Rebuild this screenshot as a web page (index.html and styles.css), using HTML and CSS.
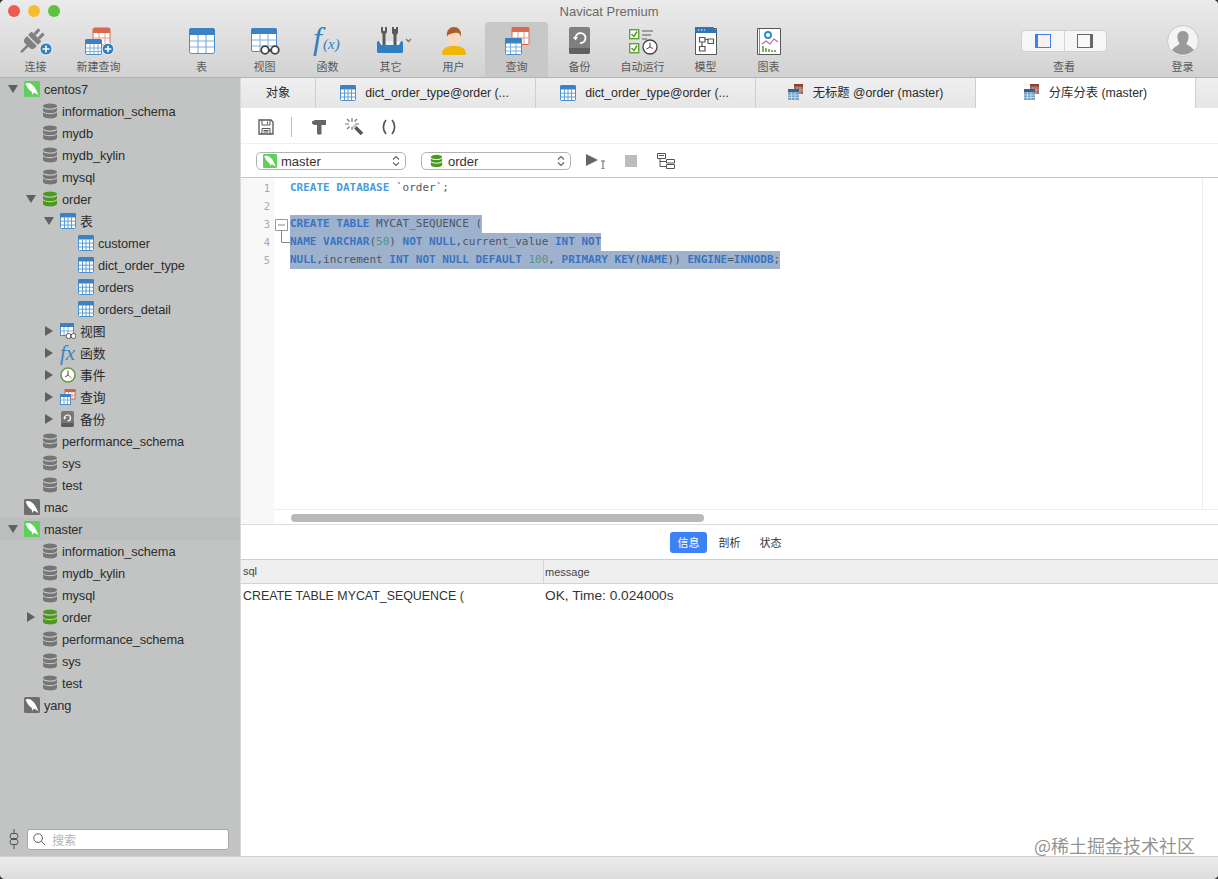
FILE: index.html

```html
<!DOCTYPE html>
<html lang="zh">
<head>
  <meta charset="UTF-8">
  <title>Navicat Premium</title>
  <link rel="stylesheet" href="styles.css">
</head>
<body>
<svg class="defs" width="0" height="0">
  <symbol id="dolphin" viewBox="0 0 16 16">
    <rect width="16" height="16" rx="1.5" fill="currentColor"/>
    <path fill="#fff" d="M1.5 2.5C5 1 8 3 10 5.500C11.800 7.800 13 10.500 14.500 14.500C12.500 12.800 11 12 9.500 11.800L8.500 14L7.500 10.500C5.500 9.500 3 6.500 1.500 2.500Z"/>
  </symbol>
  <symbol id="db" viewBox="0 0 16 16">
    <g fill="currentColor">
      <ellipse cx="8" cy="3" rx="7" ry="2.600"/>
      <path d="M1 4.600C1.500 6 4 6.800 8 6.800S14.500 6 15 4.600V7.400C15 9 12 10 8 10S1 9 1 7.400Z"/>
      <path d="M1 9C1.500 10.400 4 11.200 8 11.200S14.500 10.400 15 9V12.600C15 14.400 12 15.500 8 15.500S1 14.400 1 12.600Z"/>
    </g>
  </symbol>
  <symbol id="tbl" viewBox="0 0 26 26">
    <rect x=".5" y=".5" width="25" height="25" rx="2" fill="#fff" stroke="#4a8fcb"/>
    <path fill="#3c82c2" d="M0 2.500A2.500 2.500 0 0 1 2.500 0H23.500A2.500 2.500 0 0 1 26 2.500V7H0Z"/>
    <path stroke="#7db0dc" stroke-width="1.200" d="M9 7V25M17 7V25M1 13H25M1 19H25"/>
  </symbol>
  <symbol id="tbl4" viewBox="0 0 16 16">
    <rect x=".5" y=".5" width="15" height="15" rx="1" fill="#fff" stroke="#4a8fcb"/>
    <path fill="#3c82c2" d="M0 1.500A1.500 1.500 0 0 1 1.500 0H14.500A1.500 1.500 0 0 1 16 1.500V4.500H0Z"/>
    <path stroke="#5c9ed6" d="M4.500 4.500V15.500M8 4.500V15.500M11.500 4.500V15.500M.5 8.200H15.500M.5 12H15.500"/>
  </symbol>
  <symbol id="view-s" viewBox="0 0 16 16">
    <rect x=".5" y=".5" width="13" height="12" fill="#fff" stroke="#4a8fcb"/>
    <rect width="14" height="4" fill="#3c82c2"/>
    <path stroke="#7db0dc" d="M4 4V12M8 4V12M.5 8H13.500"/>
    <circle cx="8.500" cy="13" r="2.500" fill="#fff" stroke="#555"/>
    <circle cx="13.500" cy="13" r="2.500" fill="#fff" stroke="#555"/>
  </symbol>
  <symbol id="clock" viewBox="0 0 16 16">
    <circle cx="8" cy="8" r="7" fill="#fff" stroke="#6c9a4c" stroke-width="1.600"/>
    <path fill="none" stroke="#444" d="M8 3.500V8L5 10"/>
    <path stroke="#d06a50" d="M8 8L11.500 11"/>
  </symbol>
  <symbol id="qry" viewBox="0 0 16 16">
    <rect x="5" y="0" width="10" height="10" fill="#fff" stroke="#d0604a"/>
    <rect x="5" y="0" width="10.500" height="3" fill="#d0604a"/>
    <path stroke="#e09a8c" d="M8.500 3V10M12 3V10M5 6.500H15"/>
    <rect x=".5" y="5.500" width="10" height="10" fill="#fff" stroke="#4a8fcb"/>
    <rect x="0" y="5" width="11" height="3" fill="#3c82c2"/>
    <path stroke="#7db0dc" d="M4 8V15M7.500 8V15M.5 11H10.500"/>
  </symbol>
  <symbol id="qry-dark" viewBox="0 0 16 16">
    <rect x="6" y="0" width="9" height="10" fill="#a76a5e"/>
    <rect x="6" y="0" width="9" height="2.500" fill="#8a4034"/>
    <path stroke="#d5b5ad" stroke-width=".7" d="M9 2.500V10M12 2.500V10M6 6H15"/>
    <rect x="0" y="5" width="11" height="11" fill="#7ba3c4"/>
    <rect x="0" y="5" width="11" height="3" fill="#2f668f"/>
    <path stroke="#d6e2ec" stroke-width=".7" d="M3.500 8V16M7 8V16M0 11H11M0 13.500H11"/>
  </symbol>
  <symbol id="backup-s" viewBox="0 0 16 16">
    <rect x="1" y="0" width="13" height="16" rx="2" fill="#777"/>
    <rect x="1" y="12" width="13" height="4" rx="2" fill="#5a5a5a"/>
    <path fill="none" stroke="#fff" stroke-width="1.200" d="M4.500 7A3 3 0 1 1 7.500 10"/>
    <path fill="#fff" d="M3 6.500H6.500L4.700 8.500Z"/>
  </symbol>
  <symbol id="spin" viewBox="0 0 8 12">
    <path fill="none" stroke="#666" stroke-width="1.200" d="M1 4.500L4 1.500L7 4.500M1 7.500L4 10.500L7 7.500"/>
  </symbol>
</svg>

<div class="window">
  <header class="toolbar">
    <div class="titlebar">
      <div class="lights"><i class="red"></i><i class="yellow"></i><i class="green"></i></div>
      <div class="title">Navicat Premium</div>
      <div></div>
    </div>
    <div class="tools">
      <div class="tool">
        <svg class="ti" viewBox="0 0 34 30">
          <g fill="#808080" transform="rotate(45 14 14)">
            <rect x="7" y="9" width="14" height="5" rx="1"/>
            <path d="M7 15.500H21V18A4 4 0 0 1 17 22H11A4 4 0 0 1 7 18Z"/>
            <rect x="9.500" y="2" width="3" height="7"/>
            <rect x="15.500" y="2" width="3" height="7"/>
            <rect x="13" y="21" width="2.400" height="10"/>
          </g>
          <circle cx="27" cy="23" r="6" fill="#2f7fc1" stroke="#fff" stroke-width=".8"/>
          <path stroke="#fff" stroke-width="1.600" d="M23.500 23H30.500M27 19.500V26.500"/>
        </svg>
        <span>连接</span>
      </div>
      <div class="tool">
        <svg class="ti" viewBox="0 0 34 30">
          <rect x="11" y="2" width="17" height="17" rx="1.500" fill="#fff" stroke="#d9694f"/>
          <path fill="#d9694f" d="M11 3.500A1.500 1.500 0 0 1 12.500 2H26.500A1.500 1.500 0 0 1 28 3.500V7H11Z"/>
          <path stroke="#e29c8b" d="M17 7V19M23 7V19M11 12H28"/>
          <rect x="3.500" y="13.500" width="16" height="15" rx="1.500" fill="#fff" stroke="#4a8fcb"/>
          <path fill="#3c82c2" d="M3 15A2 2 0 0 1 5 13H18A2 2 0 0 1 20 15V18H3Z"/>
          <path stroke="#7db0dc" d="M8 18V28M12 18V28M16 18V28M4 22H19M4 25.500H19"/>
          <circle cx="26" cy="23" r="5.800" fill="#2f7fc1" stroke="#fff" stroke-width=".8"/>
          <path stroke="#fff" stroke-width="1.500" d="M22.700 23H29.300M26 19.700V26.300"/>
        </svg>
        <span>新建查询</span>
      </div>
      <div class="tool-gap"></div>
      <div class="tool">
        <svg class="ti" viewBox="0 0 34 30"><use href="#tbl" x="4" y="2" width="26" height="26"/></svg>
        <span>表</span>
      </div>
      <div class="tool">
        <svg class="ti" viewBox="0 0 34 30">
          <rect x="3.500" y="2.500" width="25" height="23" rx="1.500" fill="#fff" stroke="#4a8fcb"/>
          <path fill="#3c82c2" d="M3 4A2 2 0 0 1 5 2H27A2 2 0 0 1 29 4V8H3Z"/>
          <path stroke="#7db0dc" d="M12 8V26M20 8V26M4 14H28M4 20H28"/>
          <circle cx="17" cy="24" r="3.800" fill="#fff" stroke="#444" stroke-width="1.800"/>
          <circle cx="27" cy="24" r="3.800" fill="#fff" stroke="#444" stroke-width="1.800"/>
          <path stroke="#444" stroke-width="1.800" d="M21 24H23"/>
        </svg>
        <span>视图</span>
      </div>
      <div class="tool">
        <svg class="ti" viewBox="0 0 34 30">
          <text x="2" y="23" class="fx-big">f</text>
          <text x="12" y="23" class="fx-small">(x)</text>
        </svg>
        <span>函数</span>
      </div>
      <div class="tool">
        <svg class="ti" viewBox="0 0 34 30">
          <rect x="3" y="15" width="26" height="12" rx="1.500" fill="#2f7fc1"/>
          <path fill="#e8f0f6" d="M5 15H27L25 19H7Z"/>
          <g fill="#5a5a5a">
            <path d="M7 1H9V5H11V1H13V6L11.500 8V19H8.500V8L7 6Z"/>
            <path d="M18 1H20V3H22V1H24V7L22.500 9V19H19.500V9L18 7Z"/>
          </g>
          <path fill="none" stroke="#777" stroke-width="1.300" d="M32 13L34.500 15.500L37 13"/>
        </svg>
        <span>其它</span>
      </div>
      <div class="tool">
        <svg class="ti" viewBox="0 0 34 30">
          <path fill="#f2b705" d="M5 28C5 22 10 20 17 20S29 22 29 28C29 29 27 29 26 29H8C7 29 5 29 5 28Z"/>
          <ellipse cx="17" cy="11" rx="7" ry="9" fill="#f9d9c4"/>
          <path fill="#a9602c" d="M10 11C9 4 13 1 17 1S25 4 24 11C23 7 21 6 17 7C13 8 11 8 10 11Z"/>
        </svg>
        <span>用户</span>
      </div>
      <div class="tool is-on">
        <svg class="ti" viewBox="0 0 34 30">
          <rect x="12" y="1.500" width="17" height="17" rx="1" fill="#fff" stroke="#d9694f"/>
          <path fill="#d9694f" d="M12 1.500H29V6H12Z"/>
          <path stroke="#e29c8b" d="M18 6V18M24 6V18M12 12H29"/>
          <rect x="5.500" y="12.500" width="16" height="16" rx="1" fill="#fff" stroke="#4a8fcb"/>
          <path fill="#3c82c2" d="M5 13A1 1 0 0 1 6 12H21A1 1 0 0 1 22 13V17.500H5Z"/>
          <path stroke="#7db0dc" d="M10.500 17.500V28M16 17.500V28M6 21H21M6 25H21"/>
        </svg>
        <span>查询</span>
      </div>
      <div class="tool">
        <svg class="ti" viewBox="0 0 34 30">
          <rect x="6" y="1" width="21" height="27" rx="2" fill="#808080"/>
          <path fill="#606060" d="M6 22H27V26A2 2 0 0 1 25 28H8A2 2 0 0 1 6 26Z"/>
          <path fill="none" stroke="#fff" stroke-width="1.800" d="M12.500 12A5 5 0 1 1 17 17"/>
          <path fill="#fff" d="M10 11H15L12.500 14.500Z"/>
        </svg>
        <span>备份</span>
      </div>
      <div class="tool">
        <svg class="ti" viewBox="0 0 34 30">
          <g fill="#fff" stroke="#5fa03a" stroke-width="1.400">
            <rect x="3.700" y="3.700" width="9" height="9"/>
            <rect x="3.700" y="17.700" width="9" height="9"/>
          </g>
          <path fill="none" stroke="#5fa03a" stroke-width="1.600" d="M5.500 8L8 10.500L11 5.500M5.500 22L8 24.500L11 19.500"/>
          <path stroke="#888" stroke-width="1.600" d="M16 5H27M16 9H25M16 13H21"/>
          <circle cx="24" cy="21" r="7" fill="#fff" stroke="#444" stroke-width="1.300"/>
          <path fill="none" stroke="#444" d="M24 16.500V21L20.500 23"/>
          <path stroke="#c33" d="M24 21L27 22.500"/>
        </svg>
        <span>自动运行</span>
      </div>
      <div class="tool">
        <svg class="ti" viewBox="0 0 34 30">
          <path fill="#fff" stroke="#555" d="M6.500 2.500H27.500V28.500H6.500Z"/>
          <path fill="#2f75b5" d="M6 1H24L28 5V7H6Z"/>
          <path stroke="#fff" stroke-dasharray="1.500 1.500" d="M9 4H16"/>
          <path fill="none" stroke="#555" stroke-width="1.200" d="M10.500 11.500H16V16H10.500ZM19 13H24.500V17.500H19ZM10.500 20.500H16V25H10.500ZM16 13.500H19M13 16V20.500"/>
        </svg>
        <span>模型</span>
      </div>
      <div class="tool">
        <svg class="ti" viewBox="0 0 34 30">
          <path fill="#fff" stroke="#555" d="M5.500 2.500H28.500V28.500H5.500Z"/>
          <path stroke="#888" d="M7.500 3V28"/>
          <circle cx="16" cy="9" r="3" fill="#fff" stroke="#2f8fc1" stroke-width="2"/>
          <path fill="none" stroke="#c45cb5" stroke-width="1.200" d="M10 18L14 15L18 18L22 13L26 16"/>
          <path stroke="#5fa03a" stroke-width="1.600" d="M11 26V20M14 26V22M17 26V23M20 26V24M23 26V24"/>
        </svg>
        <span>图表</span>
      </div>
      <div class="tool tool-view">
        <div class="segment">
          <div class="seg-btn"><i class="pane pane-left"></i></div>
          <div class="seg-btn"><i class="pane pane-right"></i></div>
        </div>
        <span>查看</span>
      </div>
      <div class="tool">
        <svg class="ti avatar" viewBox="0 0 32 32">
          <circle cx="16" cy="16" r="15.500" fill="#f4f4f4" stroke="#c8c8c8"/>
          <path fill="#9a9a9a" d="M16 6C20 6 22 9 21.500 13C21.300 15.500 20 17 19.500 18.500C19.500 20 24 21 27 25A15 15 0 0 1 5 25C8 21 12.500 20 12.500 18.500C12 17 10.700 15.500 10.500 13C10 9 12 6 16 6Z"/>
        </svg>
        <span>登录</span>
      </div>
    </div>
  </header>

  <div class="main">
    <aside class="sidebar">
      <div class="tree">
        <div class="row l0"><i class="arr down"></i><svg class="ic green-ic"><use href="#dolphin"/></svg>centos7</div>
        <div class="row l1"><i class="arr"></i><svg class="ic db"><use href="#db"/></svg>information_schema</div>
        <div class="row l1"><i class="arr"></i><svg class="ic db"><use href="#db"/></svg>mydb</div>
        <div class="row l1"><i class="arr"></i><svg class="ic db"><use href="#db"/></svg>mydb_kylin</div>
        <div class="row l1"><i class="arr"></i><svg class="ic db"><use href="#db"/></svg>mysql</div>
        <div class="row l1"><i class="arr down"></i><svg class="ic db-on"><use href="#db"/></svg>order</div>
        <div class="row l2"><i class="arr down"></i><svg class="ic"><use href="#tbl4"/></svg><span class="zh">表</span></div>
        <div class="row l3"><i class="arr"></i><svg class="ic"><use href="#tbl4"/></svg>customer</div>
        <div class="row l3"><i class="arr"></i><svg class="ic"><use href="#tbl4"/></svg>dict_order_type</div>
        <div class="row l3"><i class="arr"></i><svg class="ic"><use href="#tbl4"/></svg>orders</div>
        <div class="row l3"><i class="arr"></i><svg class="ic"><use href="#tbl4"/></svg>orders_detail</div>
        <div class="row l2"><i class="arr right"></i><svg class="ic"><use href="#view-s"/></svg><span class="zh">视图</span></div>
        <div class="row l2"><i class="arr right"></i><span class="ic fx-tree">fx</span><span class="zh">函数</span></div>
        <div class="row l2"><i class="arr right"></i><svg class="ic"><use href="#clock"/></svg><span class="zh">事件</span></div>
        <div class="row l2"><i class="arr right"></i><svg class="ic"><use href="#qry"/></svg><span class="zh">查询</span></div>
        <div class="row l2"><i class="arr right"></i><svg class="ic"><use href="#backup-s"/></svg><span class="zh">备份</span></div>
        <div class="row l1"><i class="arr"></i><svg class="ic db"><use href="#db"/></svg>performance_schema</div>
        <div class="row l1"><i class="arr"></i><svg class="ic db"><use href="#db"/></svg>sys</div>
        <div class="row l1"><i class="arr"></i><svg class="ic db"><use href="#db"/></svg>test</div>
        <div class="row l0"><i class="arr"></i><svg class="ic gray-ic"><use href="#dolphin"/></svg>mac</div>
        <div class="row l0 is-sel"><i class="arr down"></i><svg class="ic green-ic"><use href="#dolphin"/></svg>master</div>
        <div class="row l1"><i class="arr"></i><svg class="ic db"><use href="#db"/></svg>information_schema</div>
        <div class="row l1"><i class="arr"></i><svg class="ic db"><use href="#db"/></svg>mydb_kylin</div>
        <div class="row l1"><i class="arr"></i><svg class="ic db"><use href="#db"/></svg>mysql</div>
        <div class="row l1"><i class="arr right"></i><svg class="ic db-on"><use href="#db"/></svg>order</div>
        <div class="row l1"><i class="arr"></i><svg class="ic db"><use href="#db"/></svg>performance_schema</div>
        <div class="row l1"><i class="arr"></i><svg class="ic db"><use href="#db"/></svg>sys</div>
        <div class="row l1"><i class="arr"></i><svg class="ic db"><use href="#db"/></svg>test</div>
        <div class="row l0"><i class="arr"></i><svg class="ic gray-ic"><use href="#dolphin"/></svg>yang</div>
      </div>
      <div class="search-bar">
        <svg class="filter" viewBox="0 0 10 20">
          <path fill="none" stroke="#555" d="M5 0V4M5 16V20M2 4.500H8L9 7.500L8 9.500H2L1 7.500ZM2 10.500H8L9 12.500L8 15.500H2L1 12.500Z"/>
        </svg>
        <div class="search">
          <svg class="glass" viewBox="0 0 14 14"><circle cx="5.500" cy="5.500" r="4.700" fill="none" stroke="#555"/><path stroke="#555" d="M9 9L13 13"/></svg>
          搜索
        </div>
      </div>
    </aside>

    <section class="content">
      <nav class="tabs">
        <div class="tab tab-obj">对象</div>
        <div class="tab tab-latin"><svg class="ic"><use href="#tbl4"/></svg>dict_order_type@order (...</div>
        <div class="tab tab-latin"><svg class="ic"><use href="#tbl4"/></svg>dict_order_type@order (...</div>
        <div class="tab"><svg class="ic"><use href="#qry-dark"/></svg>无标题 @order (master)</div>
        <div class="tab is-active"><svg class="ic"><use href="#qry-dark"/></svg>分库分表 (master)</div>
      </nav>

      <div class="actions">
        <svg class="ai" viewBox="0 0 16 16">
          <path fill="none" stroke="#555" stroke-width="1.300" d="M1 1H13L15 3V15H1Z"/>
          <path fill="none" stroke="#555" d="M4 1.500V6H12V1.500M9.500 2.500V5M4 15V9.500H12V15"/>
          <path stroke="#555" d="M5.500 11.500H10.500M5.500 13H10.500"/>
        </svg>
        <i class="act-div"></i>
        <svg class="ai hammer" viewBox="0 0 16 16"><path fill="#666" d="M1 2.500L4 1H15V6H10.500V14.500A1 1 0 0 1 9.500 15.500H7A1 1 0 0 1 6 14.500V6H3L1 4.500Z"/></svg>
        <svg class="ai wand" viewBox="0 0 20 18">
          <path stroke="#777" stroke-width="1.200" d="M8 0V4M8 9V12M1 6H5M11 6H15M3 1L5.500 3.500M13 1L10.500 3.500M3 11L5.500 8.500"/>
          <path stroke="#555" stroke-width="3.500" d="M10 8L18 16"/>
          <path stroke="#ccc" stroke-width="3.500" d="M9.500 7.500L11.500 9.500"/>
        </svg>
        <svg class="ai parens" viewBox="0 0 16 16"><path fill="none" stroke="#555" stroke-width="1.700" d="M5 1C1.500 5 1.500 11 5 15M11 1C14.500 5 14.500 11 11 15"/></svg>
      </div>

      <div class="pickers">
        <div class="picker"><svg class="ic pick-ic green-ic"><use href="#dolphin"/></svg>master<svg class="spin"><use href="#spin"/></svg></div>
        <div class="picker"><svg class="ic pick-db db-on"><use href="#db"/></svg>order<svg class="spin"><use href="#spin"/></svg></div>
        <svg class="run" viewBox="0 0 22 16">
          <path fill="#666" d="M0 1L12 7L0 13Z"/>
          <path fill="none" stroke="#666" d="M15 8H19M15 16H19M17 8V16"/>
        </svg>
        <i class="stop"></i>
        <svg class="explain" viewBox="0 0 18 16">
          <path fill="none" stroke="#555" d="M.5 .5H8.500V5.500H.5ZM9.500 6.500H17.500V10H9.500ZM9.500 11.500H17.500V15.500H9.500ZM3 5.500V13.500H9.500M3 8.500H9.500M2 2.500H7"/>
        </svg>
      </div>

      <div class="editor">
        <div class="gutter">
          <div>1</div><div>2</div><div>3</div><div>4</div><div>5</div>
        </div>
        <div class="edit-main">
          <div class="edit-text">
            <div class="fold">
              <div></div><div></div>
              <div><svg class="fold-mark" viewBox="0 0 16 18"><path fill="#fff" stroke="#999" d="M1.500 4.500H13.500V15.500H1.500Z"/><path stroke="#888" d="M4 10H11M7.500 15.500V18"/></svg></div>
              <div><svg class="fold-mark" viewBox="0 0 16 18"><path fill="none" stroke="#888" d="M7.500 0V9.500H16"/></svg></div>
            </div>
            <pre class="code"><div><b>CREATE DATABASE</b> `order`;</div><div> </div><div><span class="sel"><b>CREATE TABLE</b> MYCAT_SEQUENCE (</span></div><div><span class="sel"><b>NAME VARCHAR</b>(<em>50</em>) <b>NOT NULL</b>,current_value <b>INT NOT</b></span></div><div><span class="sel"><b>NULL</b>,increment <b>INT NOT NULL DEFAULT</b> <em>100</em>, <b>PRIMARY KEY</b>(<b>NAME</b>)) <b>ENGINE</b>=<b>INNODB</b>;</span></div></pre>
          </div>
          <div class="hscroll"><div class="thumb"></div></div>
        </div>
      </div>

      <div class="result-tabs">
        <div class="rt is-on">信息</div>
        <div class="rt">剖析</div>
        <div class="rt">状态</div>
      </div>

      <div class="grid-head">
        <div class="cell-a">sql</div>
        <div class="cell-b">message</div>
      </div>
      <div class="grid-row">
        <div class="cell-a">CREATE TABLE MYCAT_SEQUENCE (</div>
        <div class="cell-b">OK, Time: 0.024000s</div>
      </div>
    </section>
  </div>

  <footer class="statusbar"></footer>
  <div class="watermark">@稀土掘金技术社区</div>
</div>
</body>
</html>
```

FILE: styles.css

```css
* { box-sizing: border-box; }
html, body { margin: 0; height: 100%; background: #333; overflow: hidden; }
body { font-family: "Liberation Sans", "Noto Sans CJK SC", sans-serif; font-size: 13px; color: #222; }
.defs { position: absolute; }

.window {
  position: relative; height: 879px; display: flex; flex-direction: column;
  background: #fff; border-radius: 5px; overflow: hidden;
}

/* toolbar */
.toolbar {
  height: 78px; flex: none; border-bottom: 1px solid #b4b4b4;
  background: linear-gradient(#ebebeb, #d2d2d2);
}
.titlebar { height: 22px; display: grid; grid-template-columns: 1fr auto 1fr; align-items: center; }
.lights { display: flex; gap: 8px; padding-left: 8px; }
.lights i { width: 12px; height: 12px; border-radius: 50%; }
.lights .red { background: #ee5a52; }
.lights .yellow { background: #f5bd2e; }
.lights .green { background: #5ec240; }
.title { font-size: 13px; color: #6a6a6a; }

.tools { display: flex; padding: 0 4px; height: 55px; }
.tool {
  width: 63px; flex: none; display: flex; flex-direction: column; align-items: center;
  padding-top: 4px; color: #5a5a5a; font-size: 11px; line-height: 14px;
  font-family: "Noto Sans CJK SC", sans-serif;
}
.tool span { margin-top: 3px; white-space: nowrap; }
.tool-gap { width: 40px; flex: none; }
.tool.is-on { background: #c8c8c8; border-radius: 4px 4px 0 0; }
.ti { width: 34px; height: 30px; display: block; overflow: visible; }
.avatar { width: 32px; height: 32px; margin: -1px 0; }
.fx-big { font: italic 32px "Liberation Serif", serif; fill: #2f7fc1; }
.fx-small { font: italic 15px "Liberation Serif", serif; fill: #2f7fc1; }

.tool-view { width: 86px; margin-left: auto; margin-right: 44px; }
.segment {
  width: 86px; height: 22px; margin: 4px 0; display: flex;
  background: #f6f6f6; border-radius: 4px; border: 1px solid #d0d0d0;
}
.seg-btn { flex: 1; display: flex; align-items: center; justify-content: center; }
.seg-btn + .seg-btn { border-left: 1px solid #d6d6d6; }
.pane { width: 16px; height: 14px; border: 1px solid #666; display: block; }
.pane-left { border-color: #3b7ff0; background: #fdeef0; border-left-width: 3px; }
.pane-right { border-right-width: 3px; background: #f8f8f8; }

/* main area */
.main { flex: 1; display: flex; min-height: 0; }
.sidebar { width: 241px; flex: none; background: #c2c4c4; display: flex; flex-direction: column; border-right: 1px solid #d8d8d8; }
.tree { flex: 1; }

.row { height: 22px; display: flex; align-items: center; white-space: nowrap; color: #2c2c2c; font-size: 12.8px; letter-spacing: -.1px; }
.row .ic { margin-right: 4px; }
.row .zh { padding-bottom: 2px; letter-spacing: 0; }
.row.is-sel { background: #bcbdbd; }
.l0 { padding-left: 7px; }
.l1 { padding-left: 25px; }
.l2 { padding-left: 43px; }
.l3 { padding-left: 61px; }
.arr { width: 12px; height: 10px; margin-right: 5px; flex: none; display: block; position: relative; }
.arr.down::after {
  content: ""; position: absolute; left: 1px; top: 1px;
  border: 5px solid transparent; border-top: 8px solid #606060; border-bottom: 0;
}
.arr.right::after {
  content: ""; position: absolute; left: 2px; top: 0;
  border: 5px solid transparent; border-left: 8px solid #606060; border-right: 0;
}
.ic { width: 16px; height: 16px; flex: none; display: block; }
.db { color: #757575; }
.db-on { color: #4b9a1e; }
.green-ic { color: #5fd05a; }
.gray-ic { color: #6e6e6e; }
.fx-tree { font: italic 21px/16px "Liberation Serif", serif; color: #3a83bd; }

.search-bar { height: 34px; flex: none; display: flex; align-items: center; padding: 0 11px 0 9px; gap: 8px; }
.filter { width: 10px; height: 20px; flex: none; }
.search {
  flex: 1; height: 21px; background: #fff; border: 1px solid #a8a8a8; border-radius: 3px;
  display: flex; align-items: center; gap: 6px; padding-left: 5px;
  color: #b4b4b4; font-size: 12px; font-family: "Noto Sans CJK SC", sans-serif;
}
.glass { width: 13px; height: 13px; }

.content { flex: 1; min-width: 0; display: flex; flex-direction: column; }

.tabs { height: 30px; flex: none; display: flex; background: linear-gradient(#efefef, #e6e6e6); }
.tab {
  width: 220px; flex: none; display: flex; align-items: center; justify-content: center; gap: 9px;
  border-right: 1px solid #cfcfcf; font-size: 12.3px; color: #2c2c2c; white-space: nowrap;
  padding-bottom: 2px;
}
.tab-obj { width: 75px; }
.tab-latin { padding: 0 2px 0 0; }
.tab.is-active { background: #fff; }

.actions { height: 36px; flex: none; display: flex; align-items: center; padding: 3px 0 0 17px; border-bottom: 1px solid #f1f1f1; }
.ai { width: 16px; height: 16px; display: block; }
.act-div { width: 1px; height: 20px; background: #bbb; margin: 0 19px 0 17px; }
.hammer { margin-right: 17px; }
.wand { width: 20px; height: 18px; margin-right: 17px; }

.pickers { height: 34px; flex: none; display: flex; align-items: center; padding: 0 0 0 15px; border-bottom: 1px solid #c6c6c6; }
.picker {
  width: 150px; height: 18px; margin-right: 15px; flex: none; position: relative;
  display: flex; align-items: center; padding: 1px 0 0 24px;
  background: #fff; border: 1px solid #b4b4b4; border-radius: 5px; font-size: 13px; color: #333;
}
.picker + .picker { padding-left: 26px; }
.pick-ic { position: absolute; left: 6px; top: 1.500px; width: 14px; height: 14px; }
.pick-db { position: absolute; left: 8px; top: 1.500px; width: 13px; height: 14px; }
.spin { position: absolute; right: 5px; top: 2px; width: 8px; height: 12px; }
.run { width: 22px; height: 16px; margin-right: 17px; }
.stop { width: 12px; height: 12px; background: #bcbcbc; margin-right: 20px; }
.explain { width: 18px; height: 16px; }

.editor { height: 347px; flex: none; display: flex; border-bottom: 1px solid #dcdcdc; }
.gutter {
  width: 33px; flex: none; background: #f8f8f8; text-align: right; padding: 1px 4px 0 0;
  font: 10.5px/18px "DejaVu Sans Mono", monospace; color: #a8a8a8;
}
.edit-main { flex: 1; min-width: 0; display: flex; flex-direction: column; }
.edit-text { flex: 1; display: flex; padding-top: 1px; border-right: 1px solid #ececec; margin-right: 15px; min-height: 0; }
.fold { width: 16px; flex: none; }
.fold div { height: 18px; }
.fold-mark { width: 16px; height: 18px; display: block; }
.code { margin: 0; font: 11px/18px "DejaVu Sans Mono", monospace; color: #555; }
.code div { height: 18px; }
.code b { font-weight: 700; color: #4a9be0; }
.code em { font-style: normal; color: #6aa88c; }
.sel { background: #9eb2ce; display: inline-block; height: 18px; color: #4c5664; }
.sel b { color: #3a74c0; }
.sel em { color: #5a9080; }
.hscroll { height: 15px; flex: none; border-top: 1px solid #ececec; padding: 4px 0 0 17px; }
.thumb { width: 413px; height: 8px; border-radius: 4px; background: #b9b9b9; }

.result-tabs { height: 34px; flex: none; display: flex; justify-content: center; align-items: center; gap: 4px; font-family: "Noto Sans CJK SC", sans-serif; }
.rt { width: 37px; height: 21px; border-radius: 3px; text-align: center; font-size: 11px; line-height: 21px; color: #333; }
.rt.is-on { background: #3b82f6; color: #fff; }

.grid-head {
  height: 25px; flex: none; display: flex; align-items: center; background: #efefef;
  border-top: 1px solid #cdcdcd; border-bottom: 1px solid #d4d4d4; font-size: 11px; color: #444;
}
.grid-row { height: 23px; flex: none; display: flex; align-items: center; font-size: 12.4px; color: #333; }
.grid-row .cell-b { font-size: 13.7px; }
.cell-a { width: 303px; padding-left: 2px; flex: none; white-space: nowrap; }
.cell-b { padding-left: 1px; }
.grid-head .cell-a { height: 100%; line-height: 23px; border-right: 1px solid #d4d4d4; }

.statusbar { height: 23px; flex: none; background: linear-gradient(#ececec, #dcdcdc); border-top: 1px solid #d0d0d0; }

.watermark {
  position: absolute; right: 23px; top: 833px;
  font-family: "Noto Sans CJK SC", sans-serif; font-size: 18px; line-height: 24px;
  color: rgba(110, 110, 110, .75); white-space: nowrap;
}
```
